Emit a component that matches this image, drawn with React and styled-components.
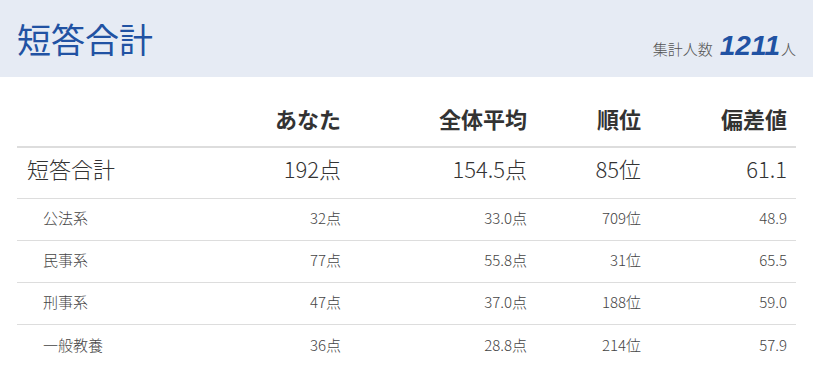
import React from 'react'
import styled, { createGlobalStyle } from 'styled-components'

const Global = createGlobalStyle`
  body {
    margin: 0;
    background: #fff;
    font-family: 'Noto Sans CJK JP', 'Noto Sans', sans-serif;
    color: #333;
  }
`

const Band = styled.header`
  height: 77px;
  background: #e6ebf4;
  display: flex;
  align-items: center;
  justify-content: space-between;
  padding: 0 17px 0 17px;
  box-sizing: border-box;
`

const Title = styled.h1`
  margin: 0;
  font-size: 34px;
  font-weight: 400;
  color: #2152a3;
  line-height: 1;
  letter-spacing: 0;
`

const Count = styled.div`
  display: flex;
  align-items: baseline;
  margin-top: 14px;
  color: #555;
  font-size: 15px;
  font-weight: 300;
`

const CountNum = styled.span`
  font-family: 'Liberation Sans', Arial, sans-serif;
  font-style: italic;
  font-weight: 700;
  font-size: 28px;
  color: #2152a3;
  margin: 0 1px 0 7px;
`

const Table = styled.div`
  margin: 20px 17px 0 17px;
`

const Row = styled.div`
  display: grid;
  grid-template-columns: 195px 138px 186px 114px 146px;
  align-items: center;
  box-sizing: border-box;
  height: ${p => p.$h}px;
  padding-bottom: ${p => p.$lift}px;
  border-bottom: ${p => p.$line}px solid #dddddd;
  font-size: ${p => p.$size}px;
  font-weight: ${p => (p.$bold ? 700 : 300)};
  color: ${p => p.$color};
`

const Cell = styled.div`
  text-align: ${p => (p.$left ? 'left' : 'right')};
  padding: ${p => (p.$left ? `0 0 0 ${p.$indent}px` : '0 9px 0 0')};
  white-space: nowrap;
`

const heads = ['あなた', '全体平均', '順位', '偏差値']

const subs = [
  ['公法系', '32点', '33.0点', '709位', '48.9'],
  ['民事系', '77点', '55.8点', '31位', '65.5'],
  ['刑事系', '47点', '37.0点', '188位', '59.0'],
  ['一般教養', '36点', '28.8点', '214位', '57.9'],
]

export default function App() {
  return (
    <>
      <Global />
      <Band>
        <Title>短答合計</Title>
        <Count>
          集計人数<CountNum>1211</CountNum>人
        </Count>
      </Band>
      <Table>
        <Row $h={51} $lift={8} $line={2} $size={22} $bold $color="#333">
          <Cell $left $indent={10}></Cell>
          {heads.map(h => (
            <Cell key={h}>{h}</Cell>
          ))}
        </Row>
        <Row $h={51} $lift={10} $line={1} $size={22} $color="#333">
          <Cell $left $indent={10}>短答合計</Cell>
          <Cell>192点</Cell>
          <Cell>154.5点</Cell>
          <Cell>85位</Cell>
          <Cell>61.1</Cell>
        </Row>
        {subs.map((r, i) => (
          <Row key={r[0]} $h={42} $lift={4} $line={i === subs.length - 1 ? 0 : 1} $size={15} $color="#444">
            <Cell $left $indent={26}>{r[0]}</Cell>
            {r.slice(1).map((v, j) => (
              <Cell key={j}>{v}</Cell>
            ))}
          </Row>
        ))}
      </Table>
    </>
  )
}
